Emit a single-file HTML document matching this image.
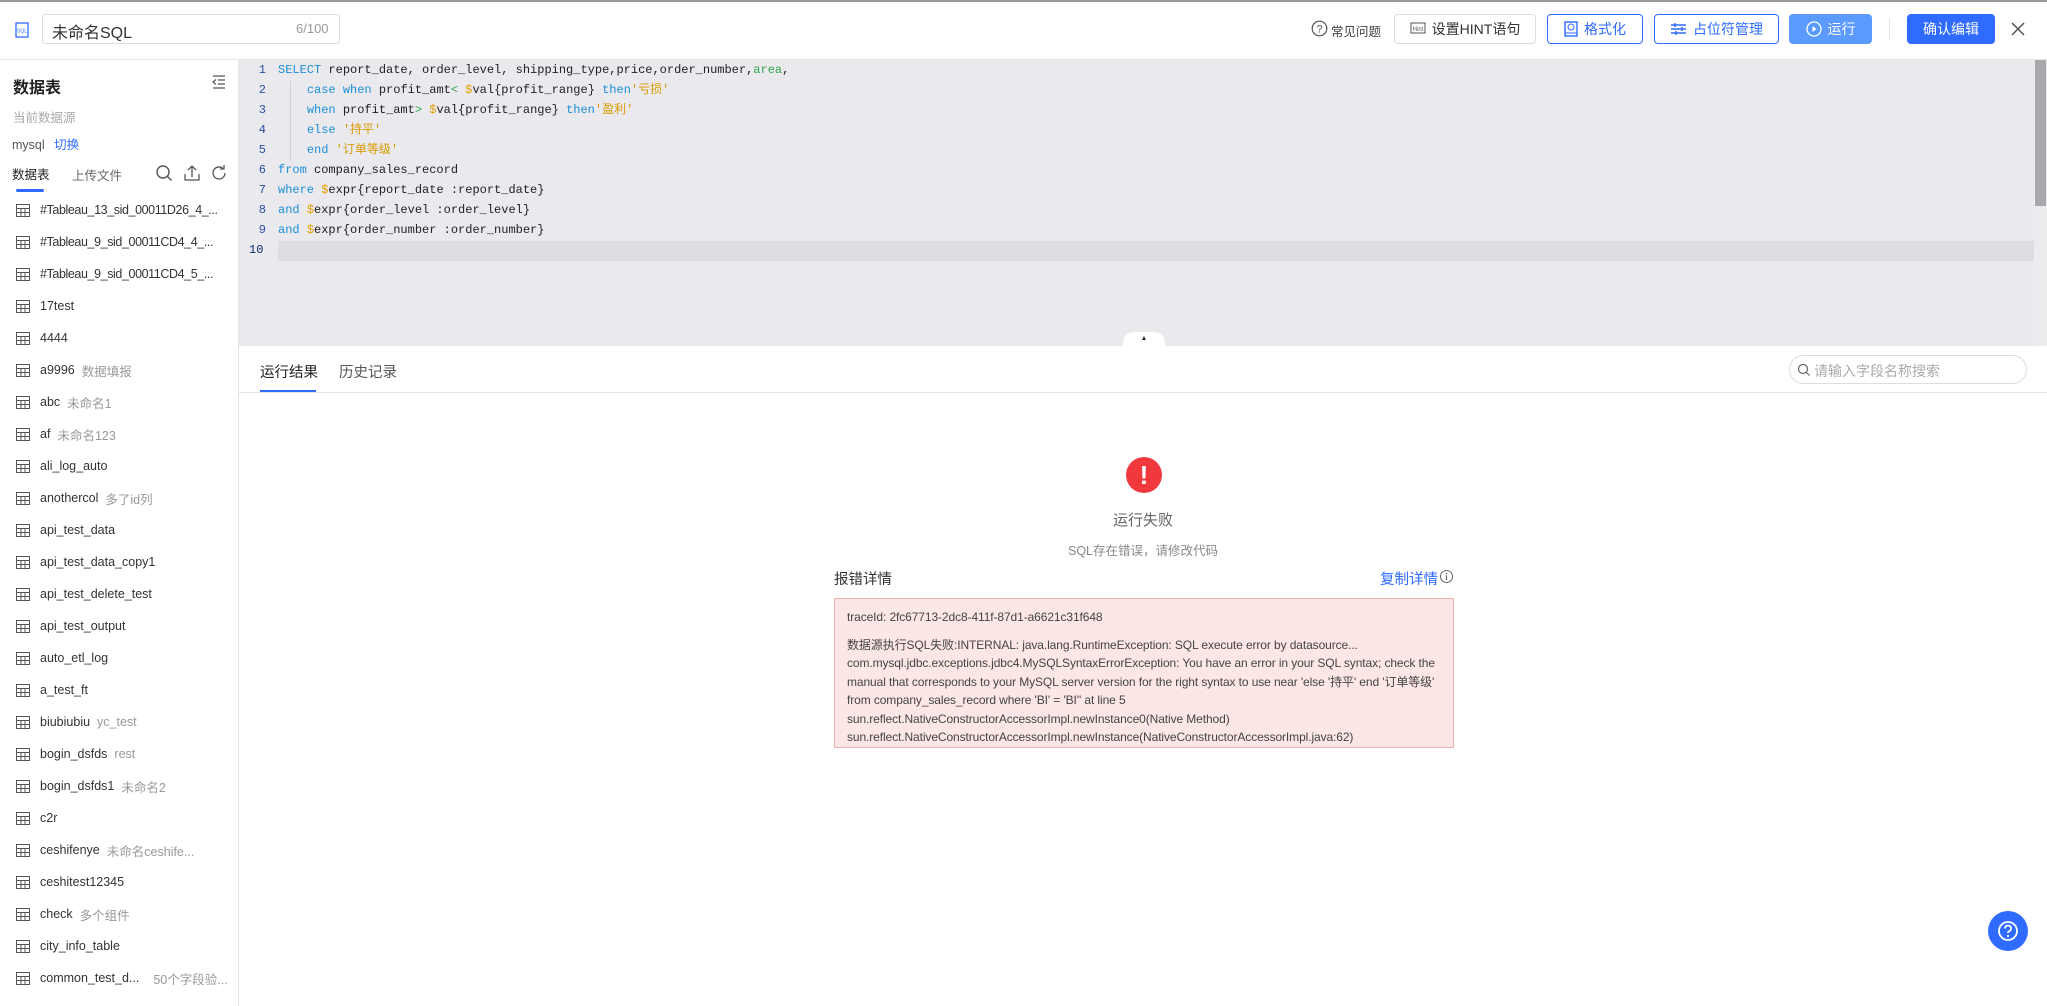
<!DOCTYPE html>
<html><head><meta charset="utf-8"><style>
*{box-sizing:border-box;margin:0;padding:0}
body{width:2047px;height:1006px;position:relative;overflow:hidden;background:#fff;font-family:"Liberation Sans","Noto Sans CJK SC",sans-serif;color:#333}
.a{position:absolute}
.btn{position:absolute;top:14px;height:30px;border:1px solid #2f6bff;border-radius:4px;color:#2f6bff;font-size:14px;display:flex;align-items:center;justify-content:center;gap:6px;background:#fff}
.code{position:absolute;left:278px;font-family:"Liberation Mono","Noto Sans CJK SC",monospace;font-size:12px;color:#222;white-space:pre;line-height:20px}
.ln{position:absolute;left:252px;width:14px;text-align:right;font-family:"Liberation Mono",monospace;font-size:12px;color:#2b4fa0;line-height:20px}
.k{color:#1a8fd8}.d{color:#e8a000}.s{color:#d99a00}.g{color:#2fa84f}
.it{position:absolute;left:16px;height:20px;display:flex;align-items:center;font-size:12.5px;color:#333;white-space:nowrap}
.it i{color:#999;font-style:normal;margin-left:7px}
.it svg{margin-right:10px}
</style></head><body>
<div class="a" style="left:0;top:0;width:2047px;height:2px;background:#999"></div>
<!-- top bar -->
<svg class="a" style="left:15px;top:22px" width="14" height="16" viewBox="0 0 14 16"><rect x="1" y="1" width="12" height="14" fill="none" stroke="#2f6bff" stroke-width="1.3"/><text x="7" y="10.5" font-size="5" fill="#2f6bff" text-anchor="middle" font-family="Liberation Sans">SQL</text></svg>
<div class="a" style="left:42px;top:14px;width:298px;height:30px;border:1px solid #ddd;border-radius:3px"></div>
<div class="a" style="left:52px;top:19px;font-size:16px;color:#333">未命名SQL</div>
<div class="a" style="left:296px;top:21px;font-size:13px;color:#999">6/100</div>
<svg class="a" style="left:1311px;top:20px" width="17" height="17"><circle cx="8.5" cy="8.5" r="7.3" fill="none" stroke="#555" stroke-width="1.2"/><text x="8.5" y="12.5" font-size="11" text-anchor="middle" fill="#555" font-family="Liberation Sans">?</text></svg>
<div class="a" style="left:1331px;top:21px;font-size:12.5px;color:#444">常见问题</div>
<div class="btn" style="left:1394px;width:142px;border-color:#ddd;color:#333"><svg width="16" height="14"><rect x="1" y="1" width="14" height="10" fill="none" stroke="#555"/><text x="8" y="9" font-size="6" text-anchor="middle" fill="#555">Hint</text></svg>设置HINT语句</div>
<div class="btn" style="left:1547px;width:96px"><svg width="14" height="16"><rect x="1" y="1" width="12" height="14" fill="none" stroke="#2f6bff" stroke-width="1.4"/><circle cx="7" cy="6" r="3" fill="none" stroke="#2f6bff"/><line x1="1" y1="12" x2="13" y2="12" stroke="#2f6bff"/></svg>格式化</div>
<div class="btn" style="left:1654px;width:125px"><svg width="17" height="14"><path d="M1 3h15M1 7h15M1 11h15M5 1v4M12 5v4M6 9v4" stroke="#2f6bff" stroke-width="1.5"/></svg>占位符管理</div>
<div class="btn" style="left:1789px;width:83px;background:#5b9bff;border-color:#5b9bff;color:#fff"><svg width="16" height="16"><circle cx="8" cy="8" r="7" fill="none" stroke="#fff" stroke-width="1.3"/><path d="M6.5 5l4 3-4 3z" fill="#fff"/></svg>运行</div>
<div class="a" style="left:1889px;top:18px;width:1px;height:22px;background:#e5e5e5"></div>
<div class="btn" style="left:1907px;width:88px;background:#2f6bff;color:#fff">确认编辑</div>
<svg class="a" style="left:2011px;top:22px" width="14" height="14"><path d="M1 1l12 12M13 1L1 13" stroke="#555" stroke-width="1.5"/></svg>
<div class="a" style="left:0;top:59px;width:2047px;height:1px;background:#e4e4e4"></div>
<!-- sidebar -->
<div class="a" style="left:238px;top:60px;width:1px;height:946px;background:#e6e6e6"></div>
<div class="a" style="left:13px;top:74px;font-size:16px;font-weight:bold;color:#222">数据表</div>
<svg class="a" style="left:212px;top:75px" width="14" height="14"><path d="M1 1h12M6 5h7M6 9h7M1 13h12M4 4.5L1 7l3 2.5" stroke="#555" fill="none" stroke-width="1.2"/></svg>
<div class="a" style="left:13px;top:107px;font-size:12.5px;color:#aaa">当前数据源</div>
<div class="a" style="left:12px;top:134px;font-size:12.5px;color:#555">mysql <span style="color:#2f6bff;margin-left:6px">切换</span></div>
<div class="a" style="left:12px;top:164px;font-size:12.5px;color:#222">数据表</div>
<div class="a" style="left:72px;top:165px;font-size:12.5px;color:#666">上传文件</div>
<div class="a" style="left:16px;top:189px;width:28px;height:3px;background:#2f6bff;border-radius:2px"></div>
<svg class="a" style="left:155px;top:164px" width="18" height="18"><circle cx="8" cy="8" r="6" fill="none" stroke="#555" stroke-width="1.4"/><path d="M12.5 12.5l4 4" stroke="#555" stroke-width="1.4"/></svg>
<svg class="a" style="left:183px;top:164px" width="18" height="18"><path d="M2 10v6h14v-6M9 13V2M5 6l4-4 4 4" fill="none" stroke="#555" stroke-width="1.3"/></svg>
<svg class="a" style="left:210px;top:164px" width="18" height="18"><path d="M15 9a6 6 0 1 1-2-4.5" fill="none" stroke="#555" stroke-width="1.3"/><path d="M14 1v4h-4" fill="none" stroke="#555" stroke-width="1.3"/></svg>
<div id="list"></div>
<!-- editor -->
<div class="a" style="left:239px;top:60px;width:1795px;height:286px;background:#e9e9ee"></div>
<div class="a" style="left:2034px;top:60px;width:13px;height:286px;background:#ececef"></div>
<div class="a" style="left:2035px;top:60px;width:11px;height:146px;background:#a9a9ad"></div>
<div class="a" style="left:278px;top:241px;width:1756px;height:20px;background:#dcdce1"></div>
<div class="a" style="left:290px;top:81px;width:1px;height:80px;background:#d0d0d6"></div>
<div class="ln" style="top:60px">1<br>2<br>3<br>4<br>5<br>6<br>7<br>8<br>9<br><b style="font-weight:normal;color:#0d2a6e;position:relative;left:-3px">10</b></div>
<div class="code" style="top:60px"><span class="k">SELECT</span> report_date, order_level, shipping_type,price,order_number,<span class="g">area</span>,
    <span class="k">case</span> <span class="k">when</span> profit_amt<span class="g">&lt;</span> <span class="d">$</span>val{profit_range} <span class="k">then</span><span class="s">'亏损'</span>
    <span class="k">when</span> profit_amt<span class="g">&gt;</span> <span class="d">$</span>val{profit_range} <span class="k">then</span><span class="s">'盈利'</span>
    <span class="k">else</span> <span class="s">'持平'</span>
    <span class="k">end</span> <span class="s">'订单等级'</span>
<span class="k">from</span> company_sales_record
<span class="k">where</span> <span class="d">$</span>expr{report_date :report_date}
<span class="k">and</span> <span class="d">$</span>expr{order_level :order_level}
<span class="k">and</span> <span class="d">$</span>expr{order_number :order_number}
</div>
<div class="a" style="left:1123px;top:332px;width:42px;height:14px;background:#fff;border-radius:10px 10px 0 0;font-size:7px;text-align:center;line-height:14px;color:#333">▲</div>
<!-- results -->
<div class="a" style="left:260px;top:361px;font-size:14.5px;color:#222">运行结果</div>
<div class="a" style="left:339px;top:361px;font-size:14.5px;color:#555">历史记录</div>
<div class="a" style="left:260px;top:390px;width:56px;height:3px;background:#2f6bff"></div>
<div class="a" style="left:239px;top:392px;width:1808px;height:1px;background:#e4e4e4"></div>
<div class="a" style="left:1789px;top:355px;width:238px;height:29px;border:1px solid #ddd;border-radius:15px"></div>
<svg class="a" style="left:1797px;top:363px" width="13" height="13"><circle cx="6" cy="6" r="4.5" fill="none" stroke="#666" stroke-width="1.2"/><path d="M9.5 9.5l3 3" stroke="#666" stroke-width="1.2"/></svg>
<div class="a" style="left:1814px;top:361px;font-size:14px;color:#aaa">请输入字段名称搜索</div>
<div class="a" style="left:1126px;top:457px;width:36px;height:36px;border-radius:50%;background:#f0383d;color:#fff;font-size:26px;font-weight:bold;text-align:center;line-height:36px">!</div>
<div class="a" style="left:239px;width:1808px;top:509px;text-align:center;font-size:15px;color:#666">运行失败</div>
<div class="a" style="left:239px;width:1808px;top:540px;text-align:center;font-size:12.5px;color:#888">SQL存在错误，请修改代码</div>
<div class="a" style="left:834px;top:568px;font-size:14.5px;color:#333">报错详情</div>
<div class="a" style="left:1380px;top:568px;font-size:14.5px;color:#2f6bff">复制详情</div>
<svg class="a" style="left:1439px;top:569px" width="15" height="15"><circle cx="7.5" cy="7.5" r="6" fill="none" stroke="#666"/><path d="M7.5 6.5v4.5M7.5 4v1.2" stroke="#666" stroke-width="1.2"/></svg>
<div class="a" style="left:834px;top:598px;width:620px;height:150px;background:#fde6e6;border:1px solid #f3b2b2;padding:9px 12px;font-size:12px;color:#444;line-height:18.5px;letter-spacing:-0.1px">
<div>traceId: 2fc67713-2dc8-411f-87d1-a6621c31f648</div>
<div style="margin-top:9px">数据源执行SQL失败:INTERNAL: java.lang.RuntimeException: SQL execute error by datasource...<br>com.mysql.jdbc.exceptions.jdbc4.MySQLSyntaxErrorException: You have an error in your SQL syntax; check the manual that corresponds to your MySQL server version for the right syntax to use near 'else '持平' end '订单等级' from company_sales_record where 'BI' = 'BI'' at line 5<br>sun.reflect.NativeConstructorAccessorImpl.newInstance0(Native Method)<br>sun.reflect.NativeConstructorAccessorImpl.newInstance(NativeConstructorAccessorImpl.java:62)</div>
</div>
<div class="a" style="left:1988px;top:911px;width:40px;height:40px;border-radius:50%;background:#2f6bff"></div>
<svg class="a" style="left:1996px;top:919px" width="24" height="24"><circle cx="12" cy="12" r="9" fill="none" stroke="#fff" stroke-width="1.8"/><path d="M9 9.5a3 3 0 1 1 4 2.8c-.8.4-1 .9-1 1.7" fill="none" stroke="#fff" stroke-width="1.8"/><circle cx="12" cy="17" r="1.1" fill="#fff"/></svg>
<script>
var items=[["#Tableau_13_sid_00011D26_4_...",""],["#Tableau_9_sid_00011CD4_4_...",""],["#Tableau_9_sid_00011CD4_5_...",""],["17test",""],["4444",""],["a9996","数据填报"],["abc","未命名1"],["af","未命名123"],["ali_log_auto",""],["anothercol","多了id列"],["api_test_data",""],["api_test_data_copy1",""],["api_test_delete_test",""],["api_test_output",""],["auto_etl_log",""],["a_test_ft",""],["biubiubiu","yc_test"],["bogin_dsfds","rest"],["bogin_dsfds1","未命名2"],["c2r",""],["ceshifenye","未命名ceshife..."],["ceshitest12345",""],["check","多个组件"],["city_info_table",""],["common_test_d...","50个字段验..."]];
var h="",ic='<svg width="14" height="13"><rect x=".5" y=".5" width="13" height="12" fill="none" stroke="#555"/><path d="M.5 4.5h13M.5 8.5h13M5 4.5v8M9 4.5v8" stroke="#555"/></svg>';
items.forEach(function(t,i){h+='<div class="it" style="top:'+(200+i*32)+'px">'+ic+'<span'+(i<3?' style="letter-spacing:-0.4px"':'')+'>'+t[0]+'</span>'+(t[1]?'<i'+(i==24?' style="margin-left:14px"':'')+'>'+t[1]+'</i>':'')+'</div>';});
document.getElementById("list").innerHTML=h;
</script>
</body></html>
